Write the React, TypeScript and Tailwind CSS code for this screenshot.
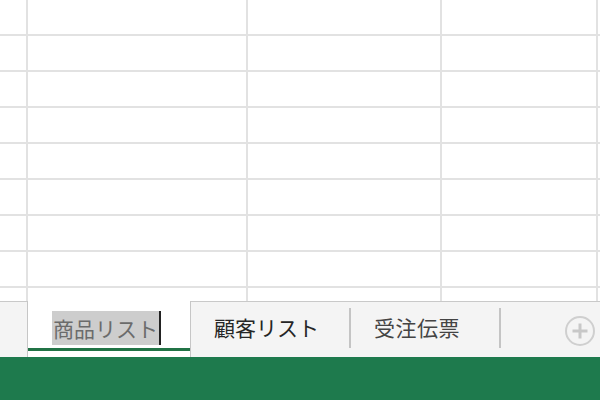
import React from "react";

const font = { fontFamily: '"Noto Sans CJK JP", "Noto Sans", sans-serif' };

export default function App() {
  const cols = "26px 218px 192px 154px 1fr";
  const rows = ["34px", "34px", "34px", "34px", "34px", "34px", "34px", "34px", "13px"];
  const cells: number[] = [];
  for (let i = 0; i < rows.length * 5; i++) cells.push(i);
  return (
    <div className="w-[600px] h-[400px] overflow-hidden flex flex-col bg-white" style={font}>
      <div
        className="grid gap-[2px] bg-[#e2e2e2] h-[301px] shrink-0"
        style={{ gridTemplateColumns: cols, gridTemplateRows: rows.join(" ") }}
      >
        {cells.map((i) => (
          <div key={i} className="bg-white" />
        ))}
      </div>
      <div className="flex h-[56px] shrink-0 bg-[#f4f4f4]">
        <div className="w-[27px] border-t border-[#c9c9c9]" />
        <div className="w-[164px] bg-white border-x border-[#c6c6c6] flex flex-col">
          <div className="flex-1 flex items-center pl-[24px] pt-[6px]">
            <span className="bg-[#cdcdcd] text-[#6b6b6b] text-[21px] leading-[34px] h-[34px] px-[1px]">
              商品リスト
            </span>
            <span className="w-[2px] h-[34px] bg-[#222]" />
          </div>
          <div className="h-[3px] bg-[#217346] mb-[6px]" />
        </div>
        <div className="flex-1 border-t border-[#c9c9c9] flex items-start">
          <div className="flex items-center h-[50px] pt-[2px]">
            <span className="ml-[23px] text-[21px] text-[#262626] w-[109px]">顧客リスト</span>
            <span className="ml-[26px] w-[2px] h-[40px] bg-[#c4c4c4]" />
            <span className="ml-[23px] text-[21px] text-[#444] w-[103px] tracking-[0.5px]">受注伝票</span>
            <span className="ml-[22px] w-[2px] h-[40px] bg-[#c4c4c4]" />
          </div>
          <div className="ml-auto mr-[4px] mt-[13px]">
            <svg width="32" height="32" viewBox="0 0 32 32">
              <circle cx="16" cy="16" r="14" fill="none" stroke="#cfcfcf" strokeWidth="2" />
              <path d="M16 8.5v15M8.5 16h15" stroke="#c8c8c8" strokeWidth="3" />
            </svg>
          </div>
        </div>
      </div>
      <div className="flex-1 bg-[#1e7a4d]" />
    </div>
  );
}
